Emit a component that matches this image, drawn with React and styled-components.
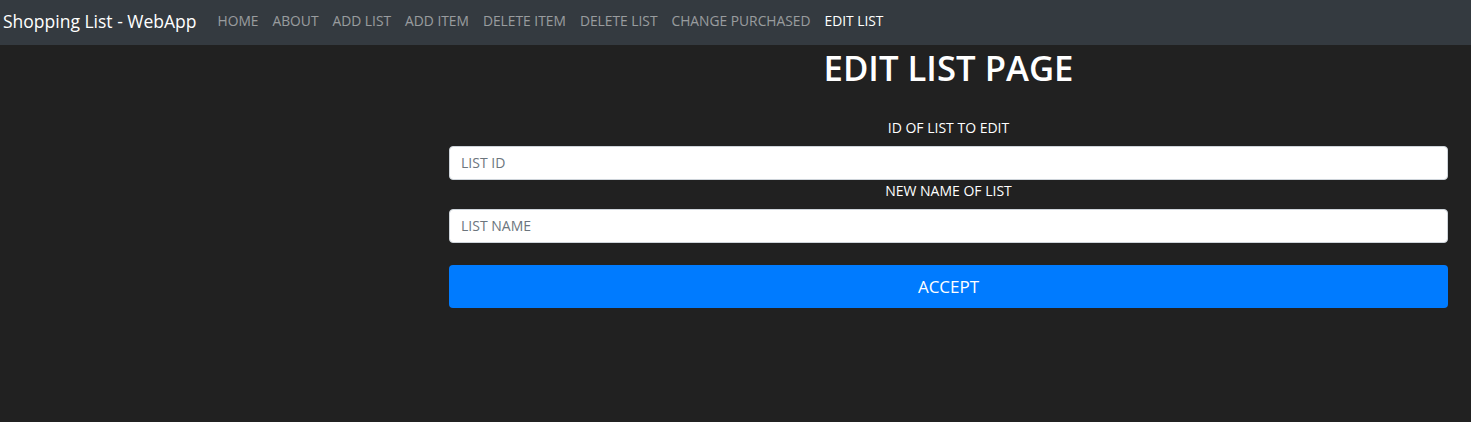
import React from 'react';
import styled, { createGlobalStyle } from 'styled-components';

const GlobalStyle = createGlobalStyle`
  body {
    margin: 0;
    background: #212121;
    font-family: 'Open Sans', 'Noto Sans', sans-serif;
    color: #fff;
  }
`;

const Navbar = styled.nav`
  display: flex;
  align-items: center;
  box-sizing: border-box;
  height: 45px;
  padding: 0 3px 4px;
  background: #343a40;
`;

const Brand = styled.a`
  font-size: 17.5px;
  color: #fff;
  margin-right: 14px;
  white-space: nowrap;
`;

const NavList = styled.ul`
  display: flex;
  list-style: none;
  margin: 0;
  padding: 0;
`;

const NavLink = styled.a`
  display: block;
  padding: 0 7px;
  font-size: 13.8px;
  text-transform: uppercase;
  color: ${({ $active }) => ($active ? '#fff' : 'rgba(255,255,255,0.5)')};
  white-space: nowrap;
`;

const Main = styled.main`
  margin-left: 449px;
  width: 999px;
  display: flex;
  flex-direction: column;
`;

const Title = styled.h1`
  margin: 2px 0 29px;
  font-size: 34.7px;
  font-weight: 600;
  text-align: center;
  line-height: 1.2;
`;

const Label = styled.label`
  display: block;
  text-align: center;
  font-size: 14px;
  line-height: 20px;
  margin-bottom: 8px;
`;

const Input = styled.input`
  box-sizing: border-box;
  width: 100%;
  height: 34px;
  padding: 0 11px;
  border: 1px solid #ced4da;
  border-radius: 4px;
  font-family: inherit;
  font-size: 14px;
  color: #495057;
  background: #fff;
  margin-bottom: ${({ $gap }) => $gap}px;

  &::placeholder {
    color: #6c757d;
    text-transform: uppercase;
  }
`;

const Button = styled.button`
  height: 43px;
  border: none;
  border-radius: 4px;
  background: #007bff;
  color: #fff;
  font-family: inherit;
  font-size: 17px;
  text-transform: uppercase;
`;

const links = ['Home', 'About', 'Add List', 'Add Item', 'Delete Item', 'Delete List', 'Change Purchased', 'Edit List'];

export default function App() {
  return (
    <>
      <GlobalStyle />
      <Navbar>
        <Brand>Shopping List - WebApp</Brand>
        <NavList>
          {links.map((l) => (
            <li key={l}>
              <NavLink $active={l === 'Edit List'}>{l}</NavLink>
            </li>
          ))}
        </NavList>
      </Navbar>
      <Main>
        <Title>EDIT LIST PAGE</Title>
        <Label>ID OF LIST TO EDIT</Label>
        <Input placeholder="List ID" $gap={1} />
        <Label>NEW NAME OF LIST</Label>
        <Input placeholder="List Name" $gap={22} />
        <Button>Accept</Button>
      </Main>
    </>
  );
}
